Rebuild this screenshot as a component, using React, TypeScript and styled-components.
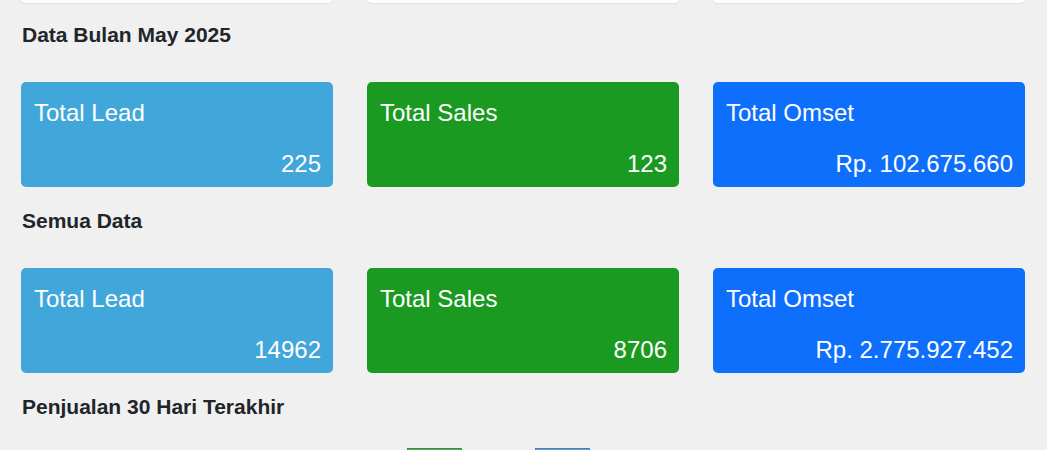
import React from 'react';
import styled, { createGlobalStyle } from 'styled-components';

const GlobalStyle = createGlobalStyle`
  html, body {
    margin: 0;
    padding: 0;
    background: #f0f0f0;
    overflow: hidden;
  }
  body {
    font-family: 'Liberation Sans', Arial, sans-serif;
    color: #212529;
  }
`;

type Tone = 'lead' | 'sales' | 'omset';

const toneColor: Record<Tone, string> = {
  lead: '#41a7da',
  sales: '#1b9a21',
  omset: '#0f6ffd',
};

const monthly = [
  { title: 'Total Lead', value: '225', tone: 'lead' as Tone },
  { title: 'Total Sales', value: '123', tone: 'sales' as Tone },
  { title: 'Total Omset', value: 'Rp. 102.675.660', tone: 'omset' as Tone },
];

const allTime = [
  { title: 'Total Lead', value: '14962', tone: 'lead' as Tone },
  { title: 'Total Sales', value: '8706', tone: 'sales' as Tone },
  { title: 'Total Omset', value: 'Rp. 2.775.927.452', tone: 'omset' as Tone },
];

const App = () => {
  return (
    <Page>
      <GlobalStyle />
      <TopRow>
        <WhiteCard />
        <WhiteCard />
        <WhiteCard />
      </TopRow>

      <SectionTitle>Data Bulan May 2025</SectionTitle>
      <CardRow>
        {monthly.map((item) => (
          <StatCard key={item.title} $tone={item.tone}>
            <CardTitle>{item.title}</CardTitle>
            <CardValue>{item.value}</CardValue>
          </StatCard>
        ))}
      </CardRow>

      <SectionTitle>Semua Data</SectionTitle>
      <CardRow>
        {allTime.map((item) => (
          <StatCard key={item.title} $tone={item.tone}>
            <CardTitle>{item.title}</CardTitle>
            <CardValue>{item.value}</CardValue>
          </StatCard>
        ))}
      </CardRow>

      <SectionTitle>Penjualan 30 Hari Terakhir</SectionTitle>
      <Legend>
        <LegendBox $color="#5aa55c" $border="#3d8f40" />
        <LegendBox $color="#6497cc" $border="#4a7fb8" />
      </Legend>
    </Page>
  );
};

export default App;

const Page = styled.div`
  width: 1047px;
  padding: 0 21px;
  box-sizing: border-box;
`;

const Row = styled.div`
  display: grid;
  grid-template-columns: repeat(3, 312px);
  column-gap: 34px;
`;

const TopRow = styled(Row)`
  margin-top: -97px;
  margin-bottom: -2px;
`;

const WhiteCard = styled.div`
  height: 100px;
  background: #ffffff;
  border-radius: 5px;
  box-shadow: 0 1px 2px rgba(0, 0, 0, 0.06);
`;

const SectionTitle = styled.h5`
  margin: 21px 0 35px 1px;
  font-size: 21px;
  line-height: 25px;
  font-weight: 700;
  color: #212529;
`;

const CardRow = styled(Row)``;

const StatCard = styled.div<{ $tone: Tone }>`
  height: 105px;
  box-sizing: border-box;
  padding: 16px 12px 9px 13px;
  border-radius: 5px;
  background: ${({ $tone }) => toneColor[$tone]};
  color: #ffffff;
  display: flex;
  flex-direction: column;
  justify-content: space-between;
`;

const CardTitle = styled.div`
  font-size: 24px;
  line-height: 29px;
`;

const CardValue = styled.div`
  font-size: 24px;
  line-height: 29px;
  text-align: right;
`;

const Legend = styled.div`
  display: flex;
  justify-content: center;
  gap: 73px;
  margin-top: -6px;
  padding-right: 50px;
`;

const LegendBox = styled.div<{ $color: string; $border: string }>`
  width: 55px;
  height: 14px;
  background: ${({ $color }) => $color};
  border: 1px solid ${({ $border }) => $border};
  box-sizing: border-box;
`;
